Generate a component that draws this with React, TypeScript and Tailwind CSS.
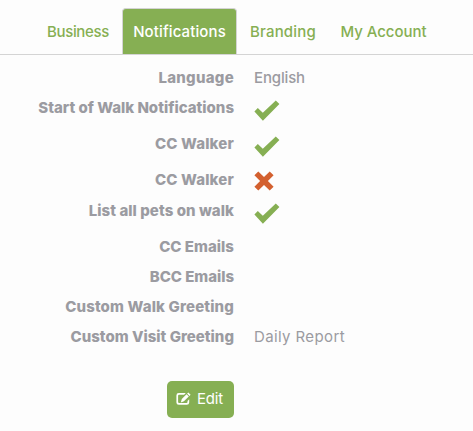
import React, { useState } from 'react';
import clsx from 'clsx';

interface Tab {
  name: string;
  className: string;
}

interface Setting {
  label: string;
  value?: string | boolean;
  rowClass: string;
  labelClass: string;
  valueClass?: string;
}

const tabs: Tab[] = [
  { name: 'Business', className: 'w-[84px] tracking-[-0.35px]' },
  { name: 'Notifications', className: 'w-[115px] tracking-[0.12px]' },
  { name: 'Branding', className: 'w-[88px] tracking-[0.2px]' },
  { name: 'My Account', className: 'w-[109px] tracking-[-0.05px]' },
];

const settings: Setting[] = [
  { label: 'Language', value: 'English', rowClass: 'h-[30px]', labelClass: 'tracking-[0.28px]', valueClass: 'font-medium tracking-[-0.15px]' },
  { label: 'Start of Walk Notifications', value: true, rowClass: 'h-9', labelClass: 'tracking-normal' },
  { label: 'CC Walker', value: true, rowClass: 'h-9', labelClass: 'tracking-[0.18px]' },
  { label: 'CC Walker', value: false, rowClass: 'h-[31px]', labelClass: 'tracking-[0.18px]' },
  { label: 'List all pets on walk', value: true, rowClass: 'h-9', labelClass: 'tracking-[0.06px]' },
  { label: 'CC Emails', rowClass: 'h-[30px]', labelClass: 'tracking-[0.03px]' },
  { label: 'BCC Emails', rowClass: 'h-[30px]', labelClass: 'tracking-[-0.03px]' },
  { label: 'Custom Walk Greeting', rowClass: 'h-[30px]', labelClass: 'tracking-[0.15px]' },
  { label: 'Custom Visit Greeting', value: 'Daily Report', rowClass: 'h-[30px]', labelClass: 'tracking-[0.01px]', valueClass: 'tracking-[0.38px]' },
];

const CheckIcon: React.FC = () => (
  <svg className="mt-[7px] h-[21px] w-[26px] text-[#86af53]" viewBox="0 0 26 21" fill="currentColor">
    <path d="M0.4 11.6 3.8 8.1 8.8 12.8 21.8 0.4 25.4 4.1 8.9 20.7Z" />
  </svg>
);

const CrossIcon: React.FC = () => (
  <svg className="mt-[6px] h-5 w-5 text-[#d3602f]" viewBox="0 0 20 20" fill="currentColor">
    <path d="M4.3 0.4 10 6.1 15.7 0.4 19.6 4.3 13.9 10 19.6 15.7 15.7 19.6 10 13.9 4.3 19.6 0.4 15.7 6.1 10 0.4 4.3Z" />
  </svg>
);

const EditIcon: React.FC = () => (
  <svg className="mb-px h-[14px] w-[15px]" viewBox="0 0 15 14" fill="currentColor">
    <path d="M9.8 1H2.8A2.4 2.4 0 0 0 .4 3.4v7A2.4 2.4 0 0 0 2.8 12.8h8a2.4 2.4 0 0 0 2.4-2.4V7.2l-1.7 1.7v1.2a1 1 0 0 1-1 1H3.1a1 1 0 0 1-1-1V3.7a1 1 0 0 1 1-1h5Z" />
    <path d="M10.5 2.2 12.8 4.5 7.9 9.3 4.8 10.4 5.8 7ZM11.1 1.6 12.3.4 14.6 2.7 13.4 3.9Z" />
  </svg>
);

const App: React.FC = () => {
  const [activeTab, setActiveTab] = useState('Notifications');

  return (
    <div className="min-h-screen bg-[#fdfdfd] font-['Inter',sans-serif] text-[15px] text-[#9b9ba1]">
      {/* Tabs */}
      <nav className="flex h-[55px] items-end gap-[2px] border-b border-[#d4d4d4] pl-9">
        {tabs.map((tab) => (
          <button
            key={tab.name}
            onClick={() => setActiveTab(tab.name)}
            className={clsx(
              'h-[46px] shrink-0 rounded-t border border-b-0 pt-[2px] text-center font-medium whitespace-nowrap',
              tab.className,
              activeTab === tab.name
                ? 'border-[#d4d4d4] bg-[#86af53] text-white'
                : 'border-transparent text-[#86af53]'
            )}
          >
            {tab.name}
          </button>
        ))}
      </nav>

      {/* Settings */}
      <dl className="pt-2">
        {settings.map((setting, index) => (
          <div key={index} className={clsx('flex gap-5', setting.rowClass)}>
            <dt className={clsx('w-[234px] text-right leading-[30px] font-extrabold whitespace-nowrap', setting.labelClass)}>
              {setting.label}
            </dt>
            <dd className={clsx('leading-[30px]', setting.valueClass)}>
              {setting.value === true && <CheckIcon />}
              {setting.value === false && <CrossIcon />}
              {typeof setting.value === 'string' && setting.value}
            </dd>
          </div>
        ))}
      </dl>

      {/* Edit button */}
      <div className="flex w-[234px] justify-end pt-[29px]">
        <button className="flex h-[37px] w-[67px] items-center gap-[6px] rounded-[5px] bg-[#86af53] pl-[9px] text-white">
          <EditIcon />
          <span className="tracking-[-0.2px]">Edit</span>
        </button>
      </div>
    </div>
  );
};

export default App;
